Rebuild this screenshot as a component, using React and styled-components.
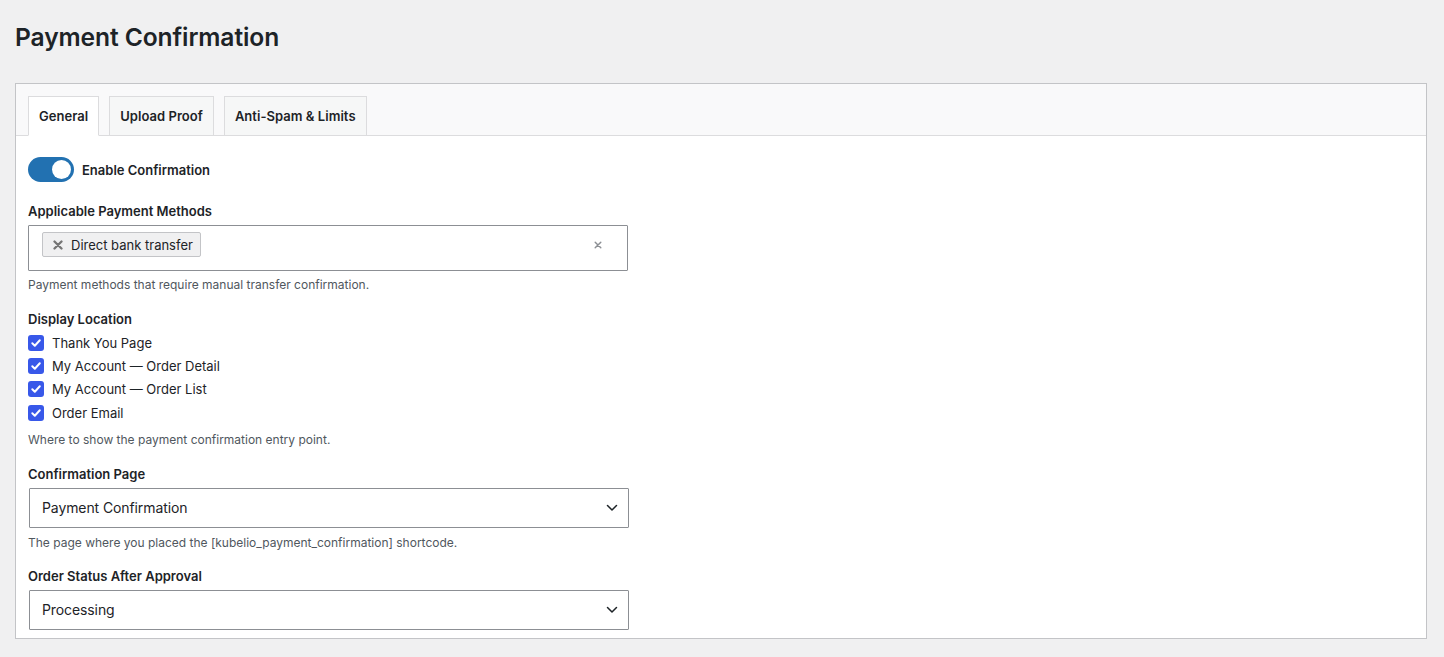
import React, { useState } from "react";
import styled, { createGlobalStyle } from "styled-components";

const Global = createGlobalStyle`
  html, body { margin: 0; padding: 0; background: #f0f0f1; }
  body { font-family: Inter, "Open Sans", "Noto Sans", sans-serif; color: #1d2327; }
  * { box-sizing: border-box; }
`;

const Wrap = styled.div`
  padding: 0 17px 0 15px;
`;

const Title = styled.h1`
  margin: 0;
  padding: 21px 0 0;
  height: 83px;
  font-size: 24.6px;
  line-height: 32px;
  font-weight: 600;
  letter-spacing: -0.1px;
  color: #1d2327;
`;

const Panel = styled.div`
  background: #fff;
  border: 1px solid #c3c4c7;
`;

const TabBar = styled.div`
  display: flex;
  gap: 10px;
  padding: 12px 12px 0;
  background: #f9f9fa;
  border-bottom: 1px solid #dcdcde;
`;

const Tab = styled.button`
  height: 40px;
  margin-bottom: -1px;
  padding: 0 10px;
  font-family: inherit;
  font-size: 13px;
  font-weight: 600;
  letter-spacing: 0.04px;
  color: #1d2327;
  border: 1px solid #dcdcde;
  border-bottom: ${(p) => (p.$active ? "1px solid #fff" : "1px solid #dcdcde")};
  background: ${(p) => (p.$active ? "#fff" : "#f6f7f7")};
  cursor: pointer;
`;

const Content = styled.div`
  padding: 21px 12px 8px;
  display: flex;
  flex-direction: column;
`;

const ToggleRow = styled.label`
  display: flex;
  align-items: center;
  gap: 8px;
  height: 25px;
  font-size: 13px;
  font-weight: 600;
  cursor: pointer;
`;

const Switch = styled.span`
  position: relative;
  width: 46px;
  height: 25px;
  border-radius: 13px;
  background: ${(p) => (p.$on ? "#2271b1" : "#8c8f94")};
  flex: none;
  &::after {
    content: "";
    position: absolute;
    top: 3px;
    left: ${(p) => (p.$on ? "24px" : "3px")};
    width: 19px;
    height: 19px;
    border-radius: 50%;
    background: #fff;
  }
`;

const Field = styled.div`
  display: flex;
  flex-direction: column;
  margin-top: ${(p) => p.$mt ?? 17}px;
`;

const Label = styled.div`
  font-size: 13px;
  line-height: 18px;
  font-weight: 600;
  color: #1d2327;
  margin-bottom: ${(p) => p.$mb ?? 5}px;
`;

const Desc = styled.div`
  font-size: 12px;
  line-height: 16px;
  color: #50575e;
  margin-top: ${(p) => p.$mt ?? 5}px;
`;

const MultiBox = styled.div`
  width: 600px;
  height: 46px;
  border: 1px solid #8c8f94;
  border-radius: 1px;
  display: flex;
  align-items: flex-start;
  padding: 6px 25px 0 13px;
  background: #fff;
`;

const Chip = styled.span`
  display: inline-flex;
  align-items: center;
  gap: 8px;
  height: 25px;
  padding: 0 7px 0 10px;
  background: #f0f0f1;
  border: 1px solid #c3c4c7;
  border-radius: 2px;
  font-size: 13px;
  color: #1d2327;
`;

const ClearX = styled.span`
  margin-left: auto;
  height: 25px;
  display: inline-flex;
  align-items: center;
  color: #8c8f94;
`;

const CheckList = styled.div`
  display: flex;
  flex-direction: column;
`;

const CheckRow = styled.label`
  display: flex;
  align-items: center;
  gap: 8px;
  height: 23.3px;
  font-size: 13px;
  color: #1d2327;
  cursor: pointer;
`;

const Box = styled.span`
  width: 16px;
  height: 16px;
  border-radius: 3px;
  background: #3858e9;
  display: inline-flex;
  align-items: center;
  justify-content: center;
  flex: none;
`;

const Select = styled.div`
  width: 600px;
  height: 40px;
  margin-left: 1px;
  border: 1px solid #8c8f94;
  border-radius: 1px;
  display: flex;
  align-items: center;
  padding: 0 10px 1px 12px;
  font-size: 14px;
  letter-spacing: -0.1px;
  color: #1d2327;
  background: #fff;
  & > svg { margin-left: auto; }
`;

const XIcon = ({ size = 9, color = "#757575", w = 2 }) => (
  <svg width={size} height={size} viewBox="0 0 10 10">
    <path d="M1.5 1.5 L8.5 8.5 M8.5 1.5 L1.5 8.5" stroke={color} strokeWidth={w} strokeLinecap="round" />
  </svg>
);

const Check = () => (
  <svg width="12" height="12" viewBox="0 0 12 12">
    <path d="M2.3 6.3 L4.8 8.7 L9.8 3.3" fill="none" stroke="#fff" strokeWidth="2" strokeLinecap="round" strokeLinejoin="round" />
  </svg>
);

const Chevron = () => (
  <svg width="12" height="8" viewBox="0 0 12 8">
    <path d="M1.5 1.5 L6 6 L10.5 1.5" fill="none" stroke="#1d2327" strokeWidth="1.5" strokeLinecap="round" strokeLinejoin="round" />
  </svg>
);

export default function App() {
  const [tab, setTab] = useState("general");
  const [on, setOn] = useState(true);
  const tabs = [
    ["general", "General"],
    ["upload", "Upload Proof"],
    ["spam", "Anti-Spam & Limits"],
  ];
  const locations = ["Thank You Page", "My Account — Order Detail", "My Account — Order List", "Order Email"];
  return (
    <>
      <Global />
      <Wrap>
        <Title>Payment Confirmation</Title>
        <Panel>
          <TabBar>
            {tabs.map(([k, t]) => (
              <Tab key={k} $active={tab === k} onClick={() => setTab(k)}>
                {t}
              </Tab>
            ))}
          </TabBar>
          <Content>
            <ToggleRow onClick={() => setOn(!on)}>
              <Switch $on={on} />
              Enable Confirmation
            </ToggleRow>
            <Field $mt={20}>
              <Label>Applicable Payment Methods</Label>
              <MultiBox>
                <Chip>
                  <XIcon size={10} w={2.3} />
                  Direct bank transfer
                </Chip>
                <ClearX>
                  <XIcon size={8} color="#8c8f94" w={1.8} />
                </ClearX>
              </MultiBox>
              <Desc $mt={6}>Payment methods that require manual transfer confirmation.</Desc>
            </Field>
            <Field>
              <Label $mb={3}>Display Location</Label>
              <CheckList>
                {locations.map((l) => (
                  <CheckRow key={l}>
                    <Box>
                      <Check />
                    </Box>
                    {l}
                  </CheckRow>
                ))}
              </CheckList>
              <Desc $mt={8}>Where to show the payment confirmation entry point.</Desc>
            </Field>
            <Field>
              <Label>Confirmation Page</Label>
              <Select>
                Payment Confirmation
                <Chevron />
              </Select>
              <Desc $mt={7}>The page where you placed the [kubelio_payment_confirmation] shortcode.</Desc>
            </Field>
            <Field $mt={16}>
              <Label>Order Status After Approval</Label>
              <Select>
                Processing
                <Chevron />
              </Select>
            </Field>
          </Content>
        </Panel>
      </Wrap>
    </>
  );
}
